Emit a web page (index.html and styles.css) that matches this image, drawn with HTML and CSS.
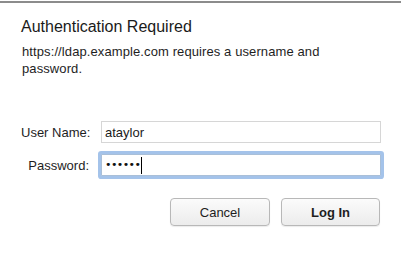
FILE: index.html
```html
<!DOCTYPE html>
<html>
<head>
<meta charset="utf-8">
<link rel="stylesheet" href="styles.css">
</head>
<body>
<div class="dialog">
  <h1 class="title">Authentication Required</h1>
  <p class="message">https://ldap.example.com requires a username and password.</p>
  <div class="form">
    <label class="label" for="user">User Name:</label>
    <input class="field" id="user" type="text" value="ataylor">
    <label class="label">Password:</label>
    <div class="field focused"><span class="dots">••••••</span><span class="caret"></span></div>
  </div>
  <div class="buttons">
    <button class="btn">Cancel</button>
    <button class="btn primary">Log In</button>
  </div>
</div>
</body>
</html>
```
FILE: styles.css
```css
html, body {
  margin: 0;
  padding: 0;
  background: #fff;
}
body {
  font-family: "Liberation Sans", Arial, sans-serif;
  color: #1e1e1e;
  width: 402px;
  height: 262px;
  overflow: hidden;
}
.dialog {
  margin-top: 1px;
  width: 401px;
  border-top: 2px solid #8c8c8c;
  padding: 14px 0 0 0;
}
.title {
  margin: 0 0 0 21px;
  font-size: 16px;
  font-weight: normal;
  line-height: 20px;
  color: #1a1a1a;
}
.message {
  margin: 6px 0 0 22px;
  width: 310px;
  font-size: 13px;
  line-height: 17px;
  letter-spacing: 0.1px;
  color: #1e1e1e;
}
.form {
  margin: 44px 0 0 21px;
  display: grid;
  grid-template-columns: 68px 280px;
  column-gap: 12px;
  row-gap: 11px;
  align-items: center;
}
.label {
  font-size: 13px;
  text-align: right;
  white-space: nowrap;
  color: #1e1e1e;
}
.field {
  box-sizing: border-box;
  height: 22px;
  width: 280px;
  margin: 0;
  border: 1px solid #d6d6d6;
  padding: 0 3px;
  font-family: "Liberation Sans", Arial, sans-serif;
  font-size: 13px;
  color: #1a1a1a;
  background: #fff;
  outline: none;
  display: flex;
  align-items: center;
}
.focused {
  border-color: #a9bfd8;
  box-shadow: 0 0 0 3px #a4c3ea;
  border-radius: 1px;
}
.dots {
  font-family: "DejaVu Sans", sans-serif;
  font-size: 11px;
  letter-spacing: -0.6px;
  line-height: 20px;
  color: #111;
}
.caret {
  display: inline-block;
  width: 1px;
  height: 17px;
  background: #000;
  margin-left: 1px;
}
.buttons {
  margin: 22px 0 0 170px;
  display: flex;
  gap: 11px;
}
.btn {
  box-sizing: border-box;
  width: 100px;
  height: 28px;
  border: 1px solid #b8b8b8;
  border-radius: 4px;
  background: linear-gradient(#fbfbfb, #ececec);
  box-shadow: 0 1px 1px rgba(0,0,0,0.08);
  font-family: "Liberation Sans", Arial, sans-serif;
  font-size: 13px;
  color: #1e1e1e;
  padding: 0;
}
.primary {
  width: 99px;
  font-weight: bold;
}
```
